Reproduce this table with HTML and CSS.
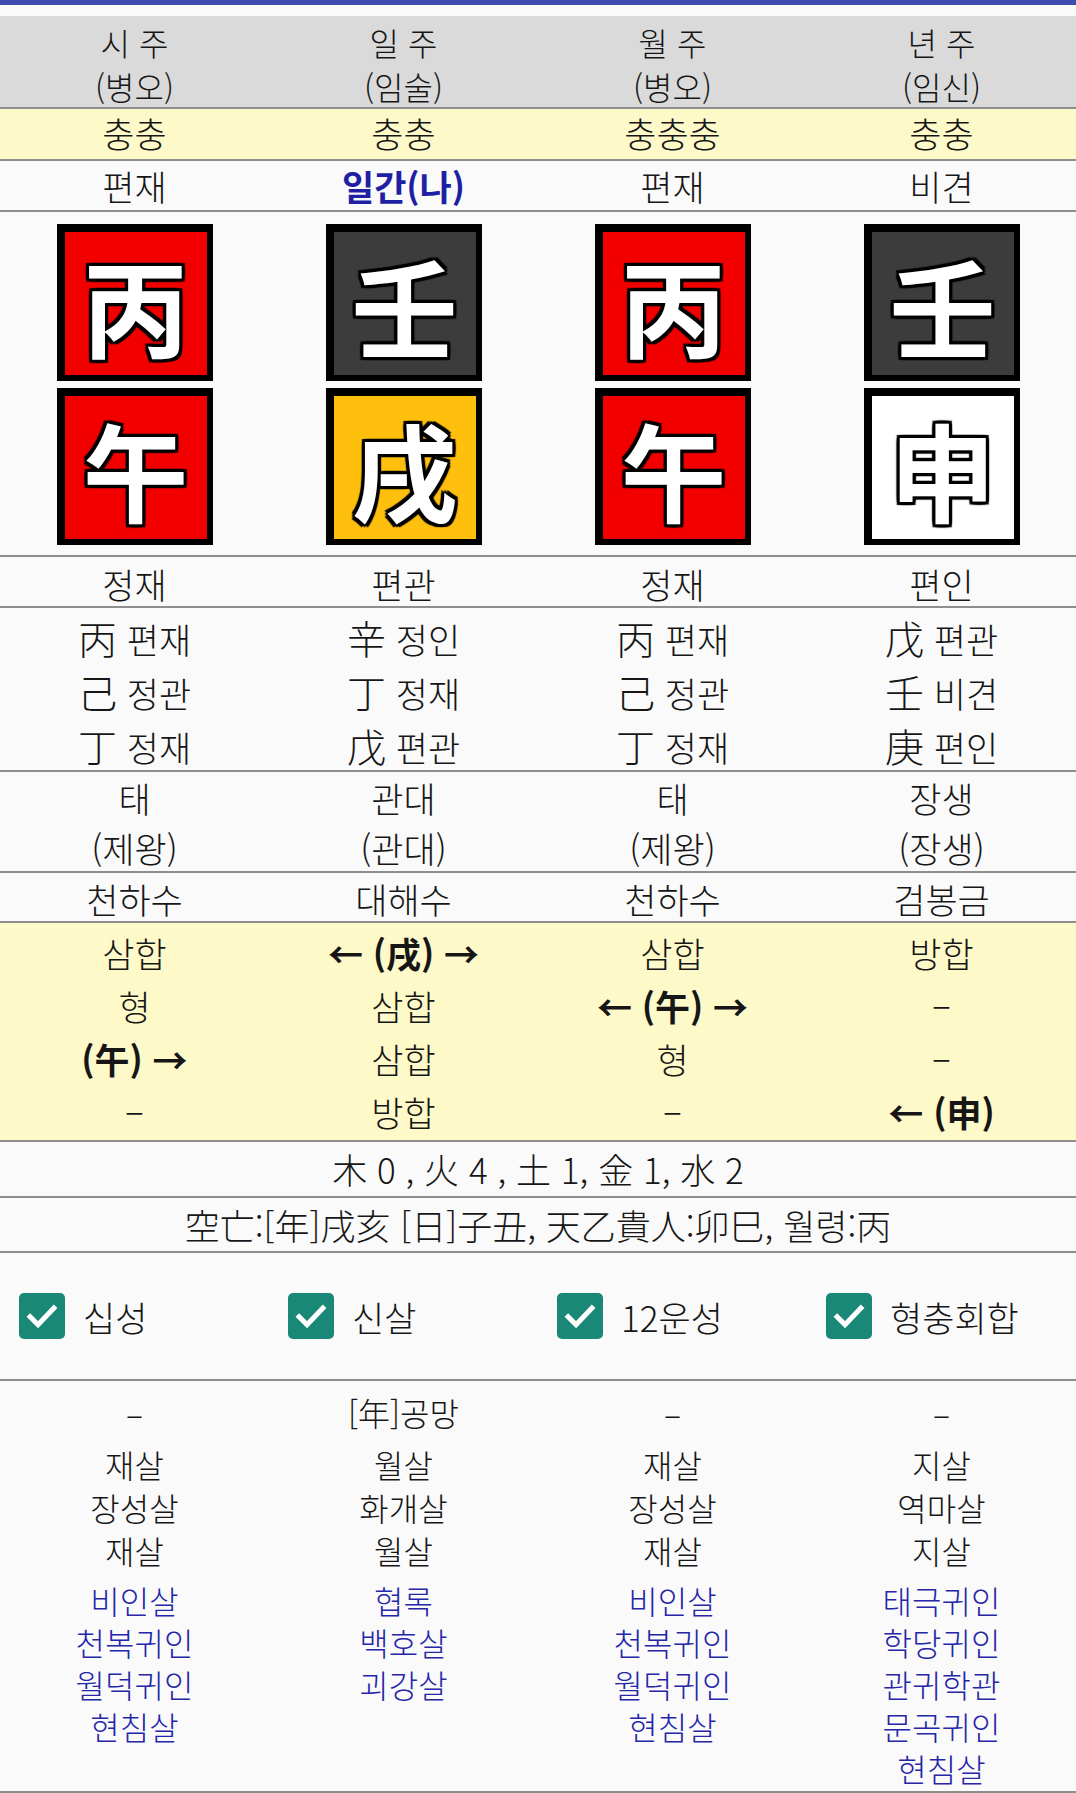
FILE: index.html
```html
<!DOCTYPE html>
<html lang="ko">
<head>
<meta charset="utf-8">
<link rel="stylesheet" href="styles.css">
</head>
<body>
<div class="topbar"></div>
<div class="topgap"></div>

<section class="row header cols">
  <div>시 주<br>(병오)</div>
  <div>일 주<br>(임술)</div>
  <div>월 주<br>(병오)</div>
  <div>년 주<br>(임신)</div>
</section>

<section class="row yellow chung cols">
  <div>충충</div><div>충충</div><div>충충충</div><div>충충</div>
</section>

<section class="row sipsung cols">
  <div>편재</div><div class="blue">일간(나)</div><div>편재</div><div>비견</div>
</section>

<section class="row boxes cols">
  <div class="pillar">
    <div class="gz red">丙</div>
    <div class="gz red">午</div>
  </div>
  <div class="pillar">
    <div class="gz dark">壬</div>
    <div class="gz yel">戌</div>
  </div>
  <div class="pillar">
    <div class="gz red">丙</div>
    <div class="gz red">午</div>
  </div>
  <div class="pillar">
    <div class="gz dark">壬</div>
    <div class="gz white">申</div>
  </div>
</section>

<section class="row jijisip cols">
  <div>정재</div><div>편관</div><div>정재</div><div>편인</div>
</section>

<section class="row stems cols">
  <div><span class="hj">丙</span> 편재<br><span class="hj">己</span> 정관<br><span class="hj">丁</span> 정재</div>
  <div><span class="hj">辛</span> 정인<br><span class="hj">丁</span> 정재<br><span class="hj">戊</span> 편관</div>
  <div><span class="hj">丙</span> 편재<br><span class="hj">己</span> 정관<br><span class="hj">丁</span> 정재</div>
  <div><span class="hj">戊</span> 편관<br><span class="hj">壬</span> 비견<br><span class="hj">庚</span> 편인</div>
</section>

<section class="row unsung cols">
  <div>태<br>(제왕)</div>
  <div>관대<br>(관대)</div>
  <div>태<br>(제왕)</div>
  <div>장생<br>(장생)</div>
</section>

<section class="row napeum cols">
  <div>천하수</div><div>대해수</div><div>천하수</div><div>검봉금</div>
</section>

<section class="row yellow rel cols">
  <div>삼합<br>형<br><b>(午) →</b><br>–</div>
  <div><b>← (戌) →</b><br>삼합<br>삼합<br>방합</div>
  <div>삼합<br><b>← (午) →</b><br>형<br>–</div>
  <div>방합<br>–<br>–<br><b>← (申)</b></div>
</section>

<section class="row ohaeng">木 0 , 火 4 , 土 1, 金 1, 水 2</section>

<section class="row gongmang">空亡:[年]戌亥 [日]子丑, 天乙貴人:卯巳, 월령:丙</section>

<section class="row checks">
  <label class="chk"><span class="box"><svg viewBox="0 0 24 24" width="38" height="38"><path d="M4.5 12.5l5 5L19.5 7" fill="none" stroke="#fff" stroke-width="3.2" stroke-linecap="square"/></svg></span>십성</label>
  <label class="chk"><span class="box"><svg viewBox="0 0 24 24" width="38" height="38"><path d="M4.5 12.5l5 5L19.5 7" fill="none" stroke="#fff" stroke-width="3.2" stroke-linecap="square"/></svg></span>신살</label>
  <label class="chk"><span class="box"><svg viewBox="0 0 24 24" width="38" height="38"><path d="M4.5 12.5l5 5L19.5 7" fill="none" stroke="#fff" stroke-width="3.2" stroke-linecap="square"/></svg></span>12운성</label>
  <label class="chk"><span class="box"><svg viewBox="0 0 24 24" width="38" height="38"><path d="M4.5 12.5l5 5L19.5 7" fill="none" stroke="#fff" stroke-width="3.2" stroke-linecap="square"/></svg></span>형충회합</label>
</section>

<section class="row sinsal cols">
  <div>
    <div class="g1">–</div>
    <div class="g2">재살<br>장성살<br>재살</div>
    <div class="g3 blue">비인살<br>천복귀인<br>월덕귀인<br>현침살</div>
  </div>
  <div>
    <div class="g1">[年]공망</div>
    <div class="g2">월살<br>화개살<br>월살</div>
    <div class="g3 blue">협록<br>백호살<br>괴강살</div>
  </div>
  <div>
    <div class="g1">–</div>
    <div class="g2">재살<br>장성살<br>재살</div>
    <div class="g3 blue">비인살<br>천복귀인<br>월덕귀인<br>현침살</div>
  </div>
  <div>
    <div class="g1">–</div>
    <div class="g2">지살<br>역마살<br>지살</div>
    <div class="g3 blue">태극귀인<br>학당귀인<br>관귀학관<br>문곡귀인<br>현침살</div>
  </div>
</section>
</body>
</html>
```

FILE: styles.css
```css
* { box-sizing: border-box; }

body {
  margin: 0;
  width: 1076px;
  background: #fafafa;
  color: #161616;
  font-family: "Noto Sans CJK KR", "Noto Sans", sans-serif;
  font-size: 35px;
  font-weight: 300;
}

.topbar { height: 5px; background: #3f4db0; }
.topgap { height: 11px; }

.row {
  border-bottom: 2px solid #8e8e8e;
  overflow: visible;
}

.cols {
  display: grid;
  grid-template-columns: repeat(4, 1fr);
  text-align: center;
}

.yellow { background: #fef9c9; }
.blue { color: #2626a8; }

.header {
  background: #dadada;
  height: 93px;
  padding-top: 4px;
  line-height: 44px;
  font-size: 32px;
}

.chung { height: 52px; line-height: 48px; }
.sipsung { height: 51px; line-height: 49px; }
.sipsung .blue { font-weight: 700; color: #1f1fa3; }

.boxes {
  height: 345px;
  padding-top: 12px;
}
.pillar {
  display: flex;
  flex-direction: column;
  align-items: center;
  gap: 7px;
}
.gz {
  width: 156px;
  height: 157px;
  border-style: solid;
  border-color: #000;
  border-width: 8px 6px 6px 8px;
  display: flex;
  align-items: center;
  justify-content: center;
  font-size: 106px;
  font-weight: 700;
  line-height: 1;
  color: #fff;
  text-shadow:
    -3px -3px 1px #000, 3px -3px 1px #000, -3px 3px 1px #000, 3px 3px 1px #000,
    0 3px 1px #000, 0 -3px 1px #000, 3px 0 1px #000, -3px 0 1px #000,
    0 0 3px #000;
}
.gz.red { background: #f20000; }
.gz.dark { background: #3c3c3c; }
.gz.yel { background: #ffbf0d; }
.gz.white { background: #ffffff; }

.jijisip { height: 51px; padding-top: 4px; line-height: 45px; }

.stems { height: 164px; padding-top: 3px; line-height: 53px; }
.hj { font-size: 39px; }

.unsung { height: 101px; padding-top: 1px; line-height: 50px; }
.napeum { height: 50px; padding-top: 3px; line-height: 46px; }

.rel { height: 219px; padding-top: 3px; line-height: 53px; }
.rel b { font-weight: 700; }

.ohaeng {
  height: 56px;
  line-height: 54px;
  text-align: center;
}
.gongmang {
  height: 55px;
  line-height: 53px;
  text-align: center;
}

.checks {
  height: 128px;
  display: grid;
  grid-template-columns: repeat(4, 1fr);
  align-items: center;
}
.chk {
  display: flex;
  align-items: center;
  gap: 18px;
  padding-left: 19px;
}
.chk .box {
  width: 46px;
  height: 46px;
  border-radius: 5px;
  background: #1a8876;
  display: flex;
  align-items: center;
  justify-content: center;
}

.sinsal {
  height: 412px;
  padding-top: 10px;
  line-height: 43px;
  font-size: 32px;
}
.g2 { margin-top: 9px; }
.g3 { margin-top: 7px; line-height: 42px; }
```
